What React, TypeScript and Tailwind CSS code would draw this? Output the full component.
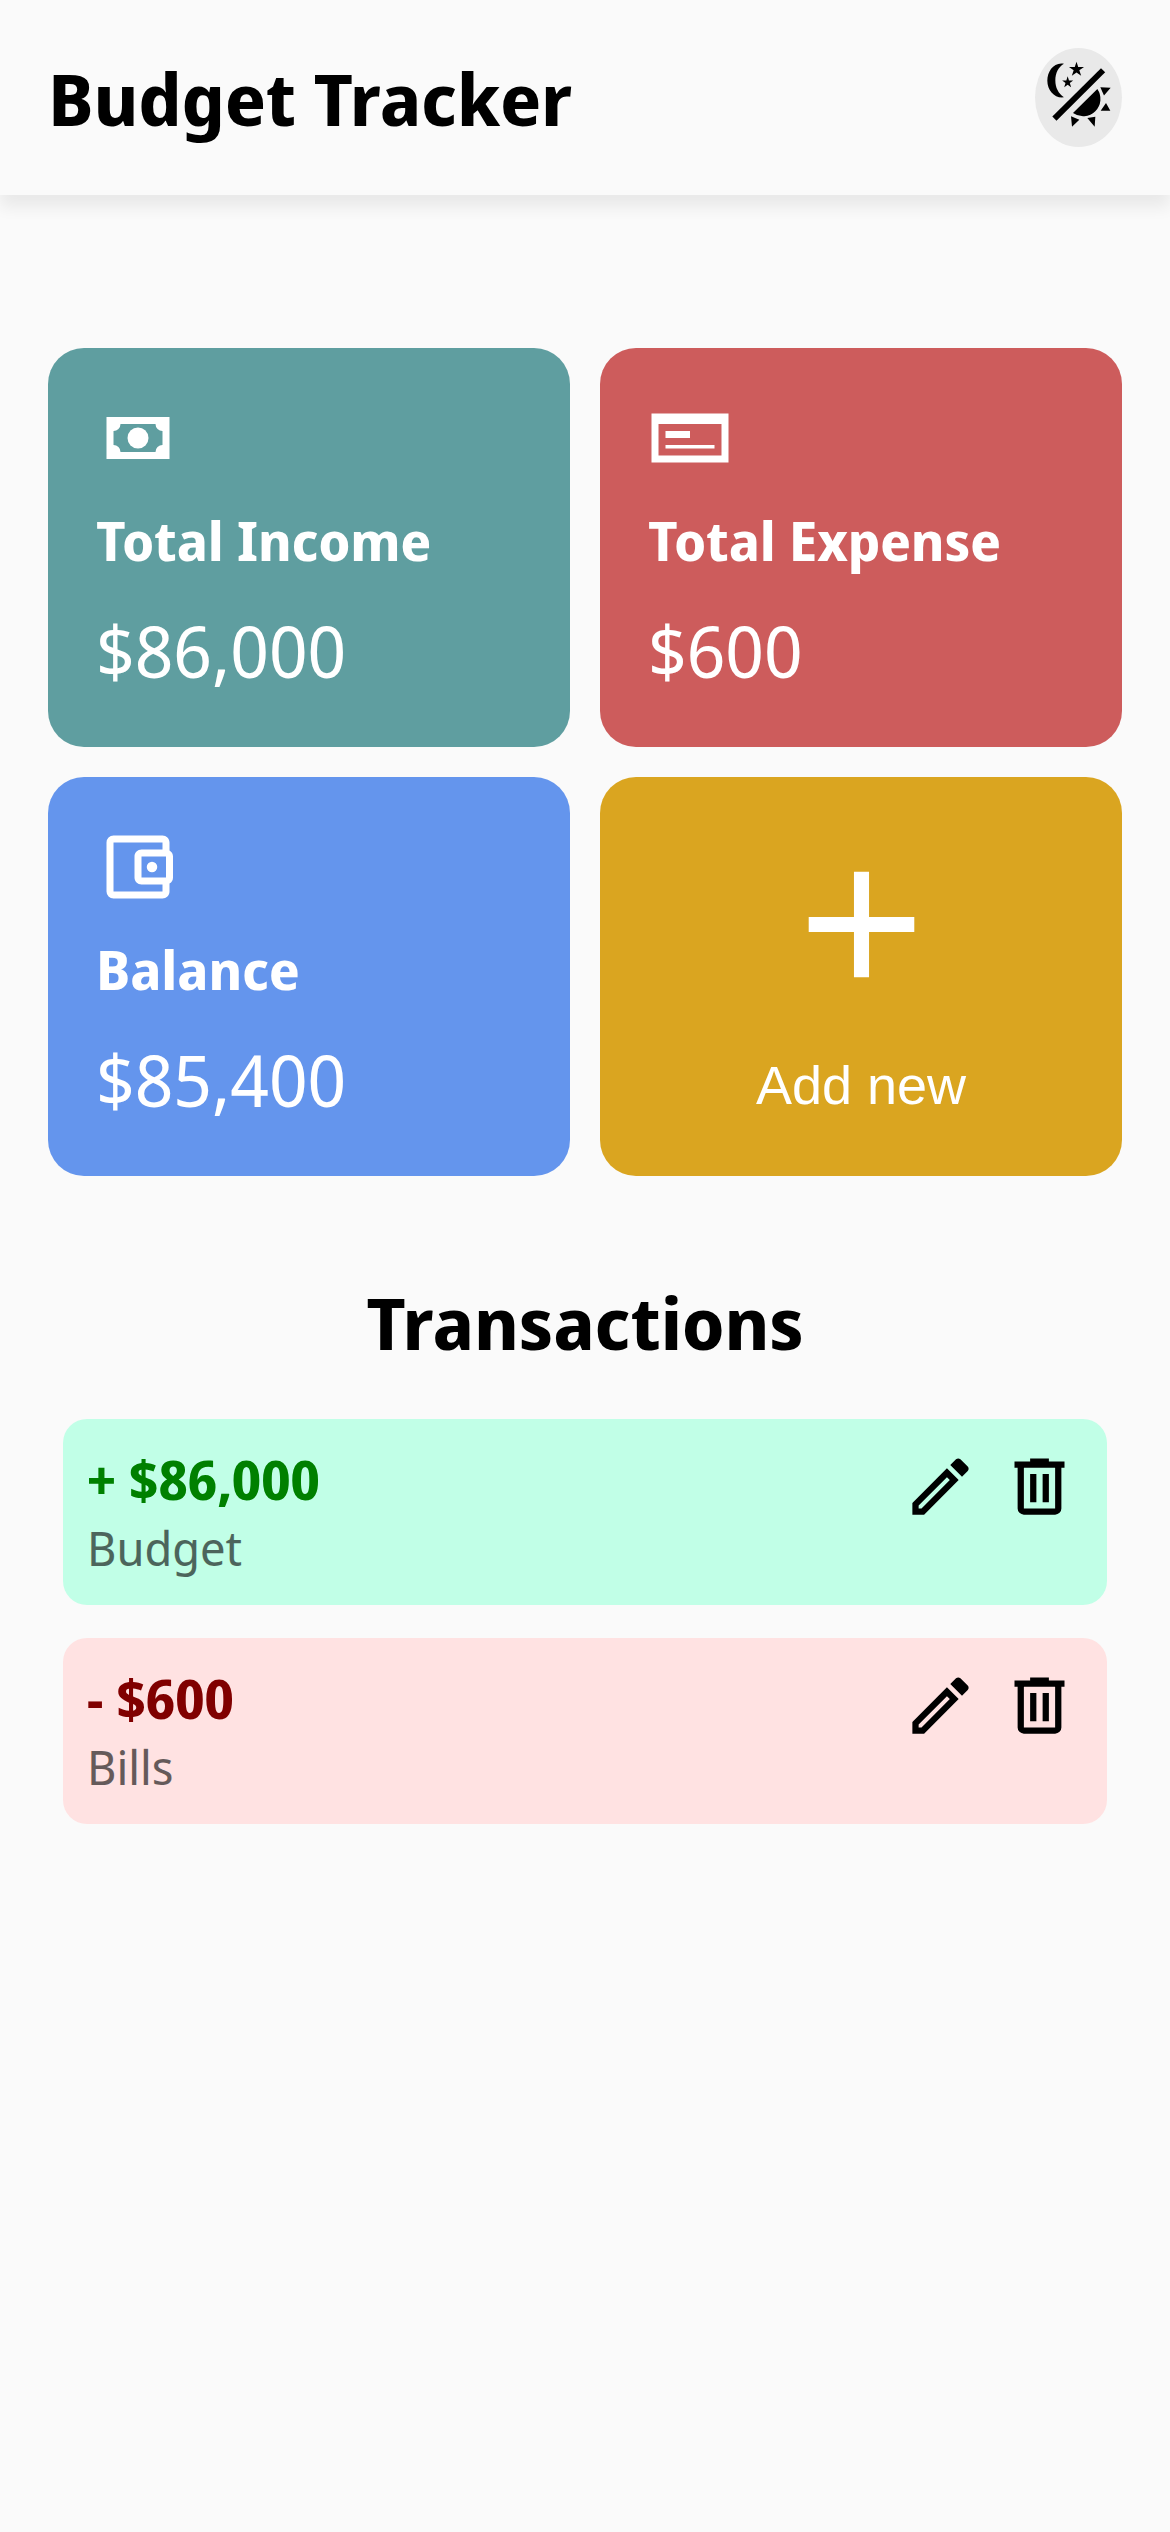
import type { ReactNode } from "react";

function ThemeIcon() {
  return (
    <svg viewBox="-15 -21 261 297" className="h-[99px] w-[87px]" fill="currentColor" aria-hidden="true">
      <path d="M72 26C42 20 22 48 22 77s22 54 50 50C55 116 46 98 46 76s9-40 26-50z" />
      <path d="M109.500 20l5.200 16H132l-14 10 5.500 16.500-14-10.200-14 10.200L101 46 87 36h17.300z" />
      <path d="M83 64l4 12.500h12.500L89.500 84l3.800 12.500L83 89l-10.300 7.500L76.500 84l-10-7.500H79z" />
      <path d="M183 40l12.500 12L49.500 197 37 184.500z" />
      <path d="M172 102A52 52 0 0 1 99 174z" />
      <path d="M181 97l31 1.500-20 23zM198 144l13 23h-29zM142 189l24-4-2 30zM93 184l25 10-22 21z" />
    </svg>
  );
}

function CashIcon() {
  return (
    <svg viewBox="0 0 24 24" className="size-[84px]" fill="currentColor" aria-hidden="true">
      <path fillRule="evenodd" d="M3 6h18v12H3V6zM7 8a2 2 0 0 1-2 2v4a2 2 0 0 1 2 2h10a2 2 0 0 1 2-2v-4a2 2 0 0 1-2-2H7z" />
      <circle cx="12" cy="12" r="3" />
    </svg>
  );
}

function CardIcon() {
  return (
    <svg viewBox="0 0 24 24" className="size-[84px]" fill="currentColor" aria-hidden="true">
      <path fillRule="evenodd" d="M1 5h22v14H1V5zm2 3v9h18V8H3z" />
      <path d="M5 10h7v2H5zM5 14h14v1H5z" />
    </svg>
  );
}

function WalletIcon() {
  return (
    <svg viewBox="0 0 24 24" className="size-[84px]" fill="currentColor" aria-hidden="true">
      <path d="M21 7.280V5c0-1.100-.9-2-2-2H5a2 2 0 0 0-2 2v14a2 2 0 0 0 2 2h14c1.100 0 2-.9 2-2v-2.280A2 2 0 0 0 22 15V9a2 2 0 0 0-1-1.720zM20 9v6h-7V9h7zM5 19V5h14v2h-6c-1.100 0-2 .9-2 2v6c0 1.100.9 2 2 2h6v2H5z" />
      <circle cx="16" cy="12" r="1.500" />
    </svg>
  );
}

function PlusIcon() {
  return (
    <svg viewBox="0 0 24 24" className="size-[181px]" fill="currentColor" aria-hidden="true">
      <path d="M19 13h-6v6h-2v-6H5v-2h6V5h2v6h6v2z" />
    </svg>
  );
}

function EditIcon() {
  return (
    <svg viewBox="0 0 24 24" className="size-[75px]" fill="currentColor" aria-hidden="true">
      <path d="M14.060 9.020l.92.92L5.920 19H5v-.92l9.060-9.060M17.660 3c-.25 0-.51.1-.7.290l-1.830 1.830 3.750 3.750 1.830-1.830c.39-.39.39-1.020 0-1.410l-2.340-2.340c-.2-.2-.45-.29-.71-.29zm-3.600 3.190L3 17.250V21h3.750L17.810 9.940l-3.750-3.750z" />
    </svg>
  );
}

function TrashIcon() {
  return (
    <svg viewBox="0 0 24 24" className="size-[75px]" fill="currentColor" aria-hidden="true">
      <path d="M9 3v1H4v2h1v13a2 2 0 0 0 2 2h10a2 2 0 0 0 2-2V6h1V4h-5V3H9M7 6h10v13H7V6m2 2v9h2V8H9m4 0v9h2V8h-2z" />
    </svg>
  );
}

function SummaryCard({ icon, label, value, color }: { icon: ReactNode; label: string; value: string; color: string }) {
  return (
    <section className={`flex h-[399px] flex-col items-start gap-6 rounded-[36px] px-12 pt-12 text-white ${color}`}>
      {icon}
      <h2 className="text-[54px] leading-[72px] font-bold">{label}</h2>
      <p className="text-[72px] leading-[101px]">{value}</p>
    </section>
  );
}

function Transaction({ amount, name, color, amountColor }: { amount: string; name: string; color: string; amountColor: string }) {
  return (
    <li className={`flex items-start justify-between rounded-3xl p-6 ${color}`}>
      <div>
        <p className={`text-[54px] leading-[72px] font-bold ${amountColor}`}>{amount}</p>
        <p className="text-5xl leading-[66px] opacity-60">{name}</p>
      </div>
      <div className="flex gap-3">
        <button className="p-1.5" aria-label="Edit">
          <EditIcon />
        </button>
        <button className="p-1.5" aria-label="Delete">
          <TrashIcon />
        </button>
      </div>
    </li>
  );
}

export default function App() {
  return (
    <div className="min-h-screen bg-[#fafafa] font-['Noto_Sans_Display','Noto_Sans',sans-serif] text-black">
      <header className="flex h-[195px] items-center justify-between px-12 shadow-[0_12px_15px_rgba(0,0,0,0.07)]">
        <h1 className="pt-0.5 text-[72px] leading-[99px] font-bold">Budget Tracker</h1>
        <button className="rounded-[50%] bg-[#e9e9e9]" aria-label="Toggle theme">
          <ThemeIcon />
        </button>
      </header>
      <main>
        <div className="grid grid-cols-2 gap-[30px] px-12 pt-[153px]">
          <SummaryCard icon={<CashIcon />} label="Total Income" value="$86,000" color="bg-[#5f9ea0]" />
          <SummaryCard icon={<CardIcon />} label="Total Expense" value="$600" color="bg-[#cd5c5c]" />
          <SummaryCard icon={<WalletIcon />} label="Balance" value="$85,400" color="bg-[#6495ed]" />
          <button className="flex h-[399px] flex-col items-center justify-center gap-[39px] rounded-[36px] bg-[#daa520] pb-[3px] font-['Liberation_Sans',sans-serif] text-[54px] leading-[63px] text-white">
            <PlusIcon />
            <span>Add new</span>
          </button>
        </div>
        <section className="px-[63px] pt-24">
          <h2 className="text-center text-[72px] leading-[101px] font-bold">Transactions</h2>
          <ul className="mt-[46px] flex flex-col gap-[33px]">
            <Transaction amount="+ $86,000" name="Budget" color="bg-[#c1ffe7]" amountColor="text-[#008000]" />
            <Transaction amount="- $600" name="Bills" color="bg-[#ffe2e2]" amountColor="text-[#800000]" />
          </ul>
        </section>
      </main>
    </div>
  );
}
